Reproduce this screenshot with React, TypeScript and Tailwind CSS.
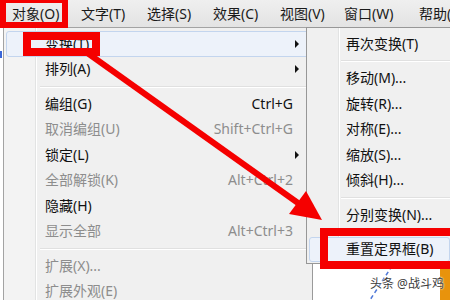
import React from 'react'

type Row =
  | { sep: true }
  | { sep?: false; label: string; shortcut?: string; arrow?: boolean; disabled?: boolean; active?: boolean }

const mainRows: Row[] = [
  { label: '变换(T)', arrow: true, active: true },
  { label: '排列(A)', arrow: true },
  { sep: true },
  { label: '编组(G)', shortcut: 'Ctrl+G' },
  { label: '取消编组(U)', shortcut: 'Shift+Ctrl+G', disabled: true },
  { label: '锁定(L)', arrow: true },
  { label: '全部解锁(K)', shortcut: 'Alt+Ctrl+2', disabled: true },
  { label: '隐藏(H)' },
  { label: '显示全部', shortcut: 'Alt+Ctrl+3', disabled: true },
  { sep: true },
  { label: '扩展(X)...', disabled: true },
  { label: '扩展外观(E)', disabled: true },
]

const subRows: Row[] = [
  { label: '再次变换(T)' },
  { sep: true },
  { label: '移动(M)...' },
  { label: '旋转(R)...' },
  { label: '对称(E)...' },
  { label: '缩放(S)...' },
  { label: '倾斜(H)...' },
  { sep: true },
  { label: '分别变换(N)...' },
  { sep: true },
  { label: '重置定界框(B)', active: true },
]

const menuBar = [
  { label: '对象(O)', w: 'w-[69px]' },
  { label: '文字(T)', w: 'w-[66px]' },
  { label: '选择(S)', w: 'w-[66px]' },
  { label: '效果(C)', w: 'w-[67px]' },
  { label: '视图(V)', w: 'w-[64px]' },
  { label: '窗口(W)', w: 'w-[75px]' },
  { label: '帮助(H)', w: 'w-[60px]' },
]

function MenuRows({ rows, gutter }: { rows: Row[]; gutter: number }) {
  return (
    <>
      {rows.map((r, i) =>
        r.sep ? (
          <div key={i} className="h-[9px] flex items-center">
            <div
              className="flex-1 border-t border-[#e0e0e0] border-b border-b-white"
              style={{ marginLeft: gutter }}
            />
          </div>
        ) : (
          <div
            key={i}
            className={
              'h-[25.5px] flex items-center pr-[10px] rounded-[3px] border ' +
              (r.active ? 'bg-[#edf2fa] border-[#c3d5ee]' : 'border-transparent')
            }
          >
            <span
              className={'whitespace-nowrap ' + (r.disabled ? 'text-[#8d8d8d]' : 'text-[#111]')}
              style={{ marginLeft: gutter + 4 }}
            >
              {r.label}
            </span>
            <span className="flex-1" />
            {r.shortcut && (
              <span className={'mr-[6px] whitespace-nowrap ' + (r.label === '编组(G)' ? 'text-[#111]' : 'text-[#8d8d8d]')}>
                {r.shortcut}
              </span>
            )}
            {r.arrow && (
              <span className="w-0 h-0 border-y-[4px] border-y-transparent border-l-[4px] border-l-[#111]" />
            )}
          </div>
        )
      )}
    </>
  )
}

export default function App() {
  return (
    <div className="relative w-[450px] h-[300px] overflow-hidden bg-white text-[14px] leading-none font-['Noto_Sans','Noto_Sans_CJK_SC',sans-serif]">
      {/* Menu bar */}
      <div className="h-[27px] flex items-center pl-[12px] bg-[linear-gradient(#efefef,#e3e3e3)] text-[#1a1a1a]">
        {menuBar.map((m) => (
          <span key={m.label} className={'shrink-0 whitespace-nowrap ' + m.w}>
            {m.label}
          </span>
        ))}
      </div>

      <div className="flex h-[273px]">
        {/* Left panel edge */}
        <div className="w-[3px] shrink-0 bg-white flex flex-col">
          <div className="h-[24px]" />
          <div className="h-[7px] w-[2px] bg-[#3a66d8]" />
        </div>

        {/* Main menu */}
        <div className="w-[310px] shrink-0 border-l border-r border-t border-[#a3a3a3] bg-[#f0f0f0] pt-[3px] px-[2px] bg-[linear-gradient(to_right,#f3f3f3_31px,#e2e3e3_31px,#e2e3e3_32px,#fff_32px,#fff_33px,#f0f0f0_33px)]">
          <MenuRows rows={mainRows} gutter={34} />
        </div>

        {/* Submenu + canvas */}
        <div className="flex-1 -ml-[7px] flex flex-col min-w-0">
          <div className="h-[237px] shrink-0 border border-r-0 border-[#979797] bg-[#f0f0f0] pt-[3px] pl-[2px] bg-[linear-gradient(to_right,#f0f0f0_31px,#e2e3e3_31px,#e2e3e3_32px,#fff_32px,#fff_33px,#f0f0f0_33px)]">
            <MenuRows rows={subRows} gutter={32} />
          </div>
          <div className="flex-1 ml-[6px] border-l border-[#9a9a9a] bg-white relative flex">
            <svg width="127" height="36" className="shrink-0">
              <line x1="79" y1="2" x2="57" y2="36" stroke="#4f78d8" strokeWidth="1.5" strokeDasharray="4 3" />
            </svg>
            <div className="w-[10px] bg-[#e8930c]" />
            <span className="absolute left-[57px] top-[14px] text-[12px] text-[#3b3b3b] whitespace-nowrap [text-shadow:0_0_2px_#fff,0_0_2px_#fff]">
              头条 @战斗鸡
            </span>
          </div>
        </div>
      </div>

      {/* Red annotations */}
      <div className="absolute left-0 top-[-3px] w-[68px] h-[31px] border-[6px] border-[#f50000]" />
      <div className="absolute left-[23px] top-[32px] w-[77px] h-[24px] border-[8px] border-[#f50000]" />
      <div className="absolute left-[320px] top-[228px] w-[140px] h-[41px] border-[8px] border-[#f50000]" />
      <svg className="absolute left-0 top-0 pointer-events-none" width="450" height="300">
        <line x1="86" y1="52" x2="298" y2="203" stroke="#f50000" strokeWidth="6" />
        <polygon points="322,220 289,214 306,191" fill="#f50000" />
      </svg>
    </div>
  )
}
